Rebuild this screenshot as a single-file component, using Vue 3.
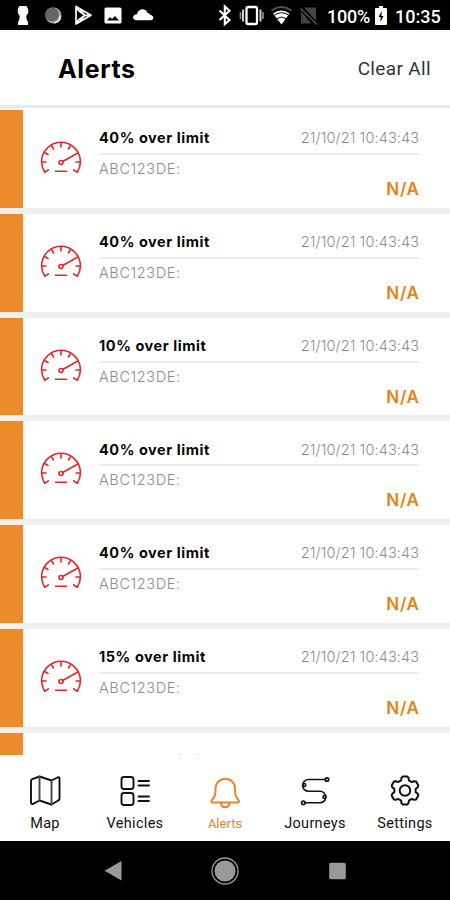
<script setup>
const alerts = [40, 40, 10, 40, 40, 15, 10].map((percent, id) => ({
  id,
  title: `${percent}% over limit`,
  time: '21/10/21 10:43:43',
  vehicle: 'ABC123DE:',
  place: 'N/A'
}))
const tabs = ['Map', 'Vehicles', 'Alerts', 'Journeys', 'Settings']
const ticks = [-122, -90, -60, -30, 0, 30, 90, 122]

// Six-toothed outline: each tooth rises from the inner radius to the outer one.
const gear = 'M' + Array.from({ length: 6 }, (_, i) =>
  [[-21, 10.8], [-16, 13], [-9, 14.3], [9, 14.3], [16, 13], [21, 10.8]]
    .map(([offset, radius]) => {
      const a = ((i * 60 + offset) * Math.PI) / 180
      return `${(17 + radius * Math.sin(a)).toFixed(2)} ${(17 - radius * Math.cos(a)).toFixed(2)}`
    })
    .join('L')
).join('L') + 'Z'
</script>

<template>
  <div class="screen">
    <header class="status">
      <svg class="left-icons" width="160" height="30" viewBox="0 0 160 30">
        <path fill="#fff" d="M19.500 6h7l1.700 3v4l-2 3 .8 5h1v4H18v-4h1l.8-5-2-3V9z" />
        <circle cx="53.500" cy="15.500" r="8" fill="#aaa" />
        <circle cx="52" cy="14.500" r="7" fill="#666" />
        <path d="M60.500 16a8 8 0 0 1-6 7" fill="none" stroke="#eee" stroke-width="1.500" />
        <path d="M76 6.500v17.500l15-8.700zM76 6.500l2.500 4 6.500 4.800-6.500 4.700L76 24M80 10l5 5.300h6M80 20.500l5-5.200" fill="none" stroke="#fff" stroke-width="1.700" stroke-linejoin="round" />
        <rect x="104.500" y="7.500" width="17" height="16" rx="1.500" fill="#fff" />
        <path fill="#000" d="M107 20.500l3-3.500 2 2 3-3 4 4.500z" />
        <path fill="#fff" d="M137 20.300c-5.500 0-5-6 0-6 1-6.500 9.500-6.500 10.500-1.200 2 0 2.500 1.200 2.800 2 4 .3 4 5.200 0 5.200z" />
      </svg>
      <svg class="right-icons" width="106" height="30" viewBox="0 0 106 30">
        <path d="M4.500 10.500l10 9.500-4.700 4.200V6.500l4.700 4.300-10 9.300" fill="none" stroke="#fff" stroke-width="2.100" />
        <rect x="31.500" y="7" width="10.500" height="17" rx="1.500" fill="none" stroke="#fff" stroke-width="2.300" />
        <path d="M28 9.500v12M45.500 9.500v12" stroke="#ccc" stroke-width="2" />
        <path d="M25.500 12v7M48 12v7" stroke="#888" stroke-width="1.700" />
        <path d="M56.500 10.500q10-7 20 0" fill="none" stroke="#555" stroke-width="2" />
        <path d="M58 13.500q8-6 16.500 0L66.500 24.500z" fill="#fff" />
        <path d="M59.500 15q7-4.500 14 0M62 18.500q4.500-3 9 0" fill="none" stroke="#000" stroke-width="1" />
        <path d="M86 11.500v12h10.500zM89 7.500h12v13.500z" fill="#444" />
        <path d="M85.500 8.500l16.500 16" stroke="#555" stroke-width="1.500" />
      </svg>
      <span class="percent">100%</span>
      <svg class="battery" width="12" height="20" viewBox="0 0 12 20">
        <path fill="#fff" d="M4 0h4v2h3q1 0 1 1v15q0 1-1 1H1q-1 0-1-1V3q0-1 1-1h3z" />
        <path fill="#000" d="M6.800 5L3.500 11h2.200L5.300 16l3.300-6H6.400z" />
      </svg>
      <span class="clock">10:35</span>
    </header>

    <div class="header">
      <h1>Alerts</h1>
      <span class="clear">Clear All</span>
    </div>

    <main class="list">
      <article v-for="alert in alerts" :key="alert.id" class="row">
        <div class="stripe"></div>
        <svg class="gauge" width="42" height="34" viewBox="0 0 42 34" fill="none" stroke="#dc2929" stroke-width="1.600" stroke-linecap="round">
          <path d="M4.700 31.200A19.400 19.400 0 1 1 37.300 31.200" />
          <path v-for="angle in ticks" :key="angle" d="M21 2v4" :transform="`rotate(${angle} 21 21)`" />
          <path d="M22.700 20.500L37.300 12.200M15.500 30.300h11" />
          <circle cx="21" cy="21.500" r="2" />
        </svg>
        <div class="content">
          <div class="top">
            <strong>{{ alert.title }}</strong>
            <time>{{ alert.time }}</time>
          </div>
          <div class="vehicle">{{ alert.vehicle }}</div>
          <div class="place">{{ alert.place }}</div>
        </div>
      </article>
    </main>

    <nav class="tabs">
      <div v-for="tab in tabs" :key="tab" class="tab" :class="{ active: tab === 'Alerts' }">
        <svg width="34" height="36" viewBox="0 0 34 36" fill="none" stroke="currentColor" stroke-width="1.900" stroke-linejoin="round" stroke-linecap="round">
          <g v-if="tab === 'Map'">
            <path d="M3 8q0-1.300 1.300-1.800L11.500 3.500l12 4 6-3q2-.8 2 1.200v20q0 1.300-1.300 1.800L23.500 31.500l-12-4-6.500 3.300q-2 .7-2-1.300z" />
            <path d="M11.500 3.500v24M23.500 7.500v24" stroke="#444" />
          </g>
          <g v-else-if="tab === 'Vehicles'">
            <rect x="3.500" y="4" width="12" height="12" rx="2.500" />
            <rect x="3.500" y="20" width="12" height="12" rx="2.500" />
            <path d="M20.500 8H31M20.500 12.500H31M20.500 23.500H31M20.500 28H31" />
          </g>
          <g v-else-if="tab === 'Alerts'">
            <path d="M4 29.500q-1.300-1.200 0-2.700Q7.500 23.500 7.500 19v-3.500a9.800 9.800 0 0 1 19.600 0V19q0 4.500 3.200 7.800 1.300 1.500 0 2.700z" />
            <path d="M12.800 30q.7 4.200 4.400 4.200t4.400-4.200" />
          </g>
          <g v-else-if="tab === 'Journeys'">
            <path d="M27 6.500H10.500a5.900 5.900 0 0 0 0 11.800H22a5.700 5.700 0 0 1 0 11.500H7" stroke-width="1.600" />
            <g stroke-width="1.700">
              <circle cx="29" cy="6.500" r="1.700" /><circle cx="5.300" cy="29.800" r="1.700" />
              <circle cx="6.200" cy="12" r="1.500" /><circle cx="26.500" cy="24" r="1.500" />
            </g>
          </g>
          <g v-else transform="translate(0 .5)">
            <path :d="gear" stroke-width="2" />
            <circle cx="17" cy="17" r="5.300" />
          </g>
        </svg>
        <span>{{ tab }}</span>
      </div>
    </nav>

    <footer class="system">
      <svg width="18" height="20" viewBox="0 0 18 20"><path d="M17.500 0v19.500L.5 9.800z" fill="#999" /></svg>
      <svg width="28" height="28" viewBox="0 0 28 28">
        <circle cx="14" cy="14" r="13" fill="none" stroke="#999" stroke-width="1.300" />
        <circle cx="14" cy="14" r="10.500" fill="#999" />
      </svg>
      <svg width="18" height="18" viewBox="0 0 18 18"><rect x="1.200" y=".7" width="16.600" height="16.600" rx="1.500" fill="#999" /></svg>
    </footer>
  </div>
</template>

<style>
body { margin: 0; overflow: hidden; }
</style>

<style scoped>
.screen { width: 450px; height: 900px; display: flex; flex-direction: column; background: #fff; font-family: Inter, sans-serif; overflow: hidden; }
.status { height: 30px; flex: none; display: flex; align-items: center; background: #000; color: #fff; font-family: Roboto, sans-serif; font-weight: 500; font-size: 18px; white-space: nowrap; }
.right-icons { margin-left: 55px; }
.percent { margin-left: 6px; width: 43px; line-height: 30px; padding-top: 3px; letter-spacing: -.2px; }
.battery { margin: 2px 0 0 5px; }
.clock { margin-left: 8px; line-height: 30px; padding-top: 3px; }
.header { height: 75px; flex: none; box-sizing: border-box; display: flex; align-items: center; justify-content: space-between; padding: 3px 19px 0 58px; }
h1 { margin: 0; font-size: 25px; line-height: 30px; font-weight: 700; letter-spacing: .6px; color: #000; }
.clear { font: 400 19px/30px Roboto, sans-serif; color: #333; letter-spacing: .35px; }
.list { height: 650px; flex: none; box-sizing: border-box; overflow: hidden; border-top: 3px solid #e9e9e9; padding-top: 2px; }
.row { height: 103.8px; box-sizing: border-box; border-bottom: 6px solid #f0f0f0; display: flex; }
.stripe { width: 23px; background: #ec8b29; flex: none; }
.gauge { margin: 31px 0 0 17px; flex: none; }
.content { width: 320px; margin-left: 17px; padding-top: 16.300px; }
.top { height: 26.700px; border-bottom: 2px solid #ebebeb; display: flex; justify-content: space-between; line-height: 24px; white-space: nowrap; }
strong { font-size: 14.500px; font-weight: 700; color: #050505; letter-spacing: .55px; }
time { font-size: 14.500px; font-weight: 300; color: #8d8d8d; letter-spacing: .1px; margin-right: -.1px; }
.vehicle { font-size: 14.500px; line-height: 20px; padding-top: 4px; height: 20px; font-weight: 300; color: #8d8d8d; letter-spacing: .6px; }
.place { color: #e98112; font-size: 17px; font-weight: 600; line-height: 20px; text-align: right; letter-spacing: .7px; margin-right: -.7px; }
.tabs { height: 86px; flex: none; display: grid; grid-template-columns: repeat(5, 1fr); background: #fff; }
.tab { display: flex; flex-direction: column; align-items: center; padding-top: 18px; color: #111; font: 14.500px/16px Roboto, sans-serif; letter-spacing: .3px; }
.tab svg { flex: none; }
.tab span { margin-top: 7px; }
.tab.active { color: #ed8125; font-size: 13px; letter-spacing: 0; }
.system { height: 59px; flex: none; background: #000; display: flex; align-items: center; justify-content: center; gap: 89px; }
</style>
